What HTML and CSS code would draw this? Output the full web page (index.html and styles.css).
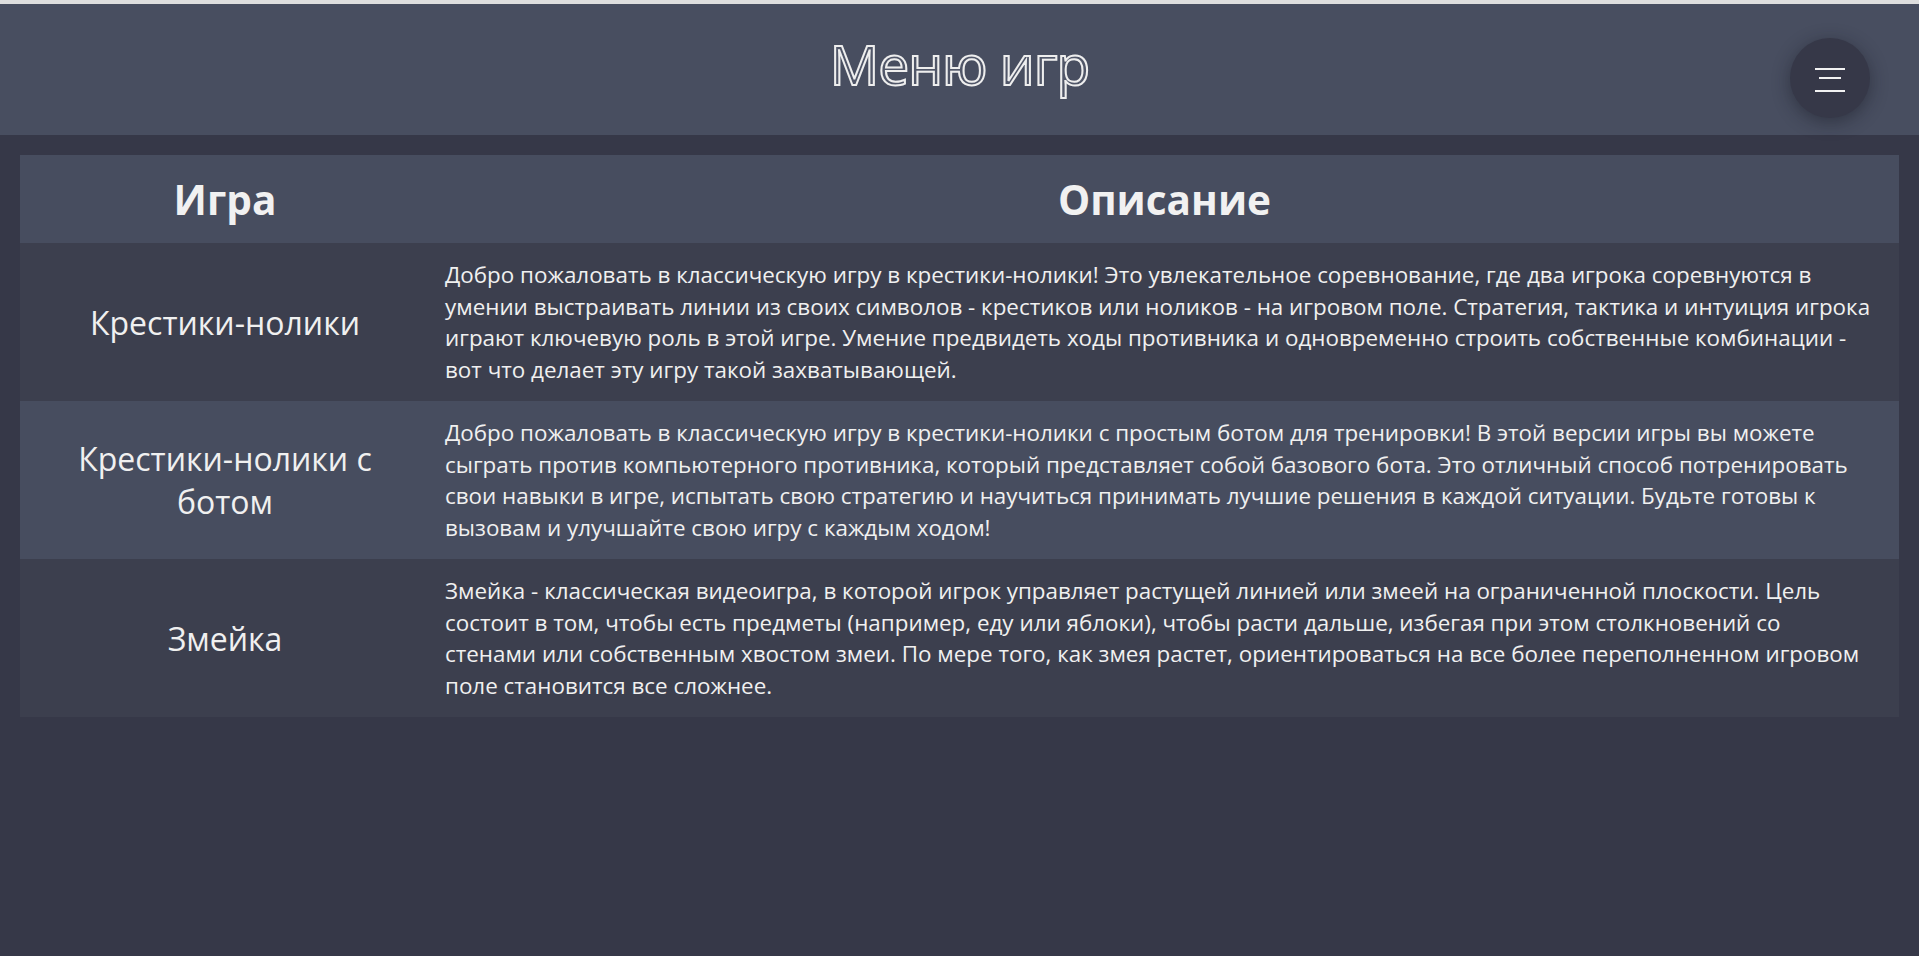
FILE: index.html
```html
<!DOCTYPE html>
<html lang="ru">
<head>
<meta charset="utf-8">
<title>Меню игр</title>
<link rel="stylesheet" href="styles.css">
</head>
<body>
<header class="topbar">
  <h1 class="title">Меню игр</h1>
  <button class="menu-btn" aria-label="Меню">
    <svg width="80" height="80" viewBox="0 0 80 80">
      <rect x="25" y="30" width="30" height="2" fill="#f2f2f2"/>
      <rect x="29" y="39" width="22" height="2" fill="#f2f2f2"/>
      <rect x="25" y="52" width="30" height="2" fill="#f2f2f2"/>
    </svg>
  </button>
</header>
<main class="content">
  <table class="games">
    <thead>
      <tr><th class="col-game">Игра</th><th class="col-desc">Описание</th></tr>
    </thead>
    <tbody>
      <tr>
        <td class="game-name">Крестики-нолики</td>
        <td class="game-desc">Добро пожаловать в классическую игру в крестики-нолики! Это увлекательное соревнование, где два игрока соревнуются в умении выстраивать линии из своих символов - крестиков или ноликов - на игровом поле. Стратегия, тактика и интуиция игрока играют ключевую роль в этой игре. Умение предвидеть ходы противника и одновременно строить собственные комбинации - вот что делает эту игру такой захватывающей.</td>
      </tr>
      <tr>
        <td class="game-name">Крестики-нолики с ботом</td>
        <td class="game-desc">Добро пожаловать в классическую игру в крестики-нолики с простым ботом для тренировки! В этой версии игры вы можете сыграть против компьютерного противника, который представляет собой базового бота. Это отличный способ потренировать свои навыки в игре, испытать свою стратегию и научиться принимать лучшие решения в каждой ситуации. Будьте готовы к вызовам и улучшайте свою игру с каждым ходом!</td>
      </tr>
      <tr>
        <td class="game-name">Змейка</td>
        <td class="game-desc">Змейка - классическая видеоигра, в которой игрок управляет растущей линией или змеей на ограниченной плоскости. Цель состоит в том, чтобы есть предметы (например, еду или яблоки), чтобы расти дальше, избегая при этом столкновений со стенами или собственным хвостом змеи. По мере того, как змея растет, ориентироваться на все более переполненном игровом поле становится все сложнее.</td>
      </tr>
    </tbody>
  </table>
</main>
</body>
</html>
```

FILE: styles.css
```css
html, body {
  margin: 0;
  padding: 0;
}

body {
  background: #363848;
  border-top: 4px solid #dedede;
  font-family: "Open Sans", "Noto Sans", sans-serif;
  color: #f0f0f0;
  min-height: 952px;
}

.topbar {
  position: relative;
  height: 131px;
  background: #484e60;
  display: flex;
  align-items: center;
  justify-content: center;
}

.title {
  margin: 0;
  font-family: "Open Sans", "Noto Sans", sans-serif;
  font-weight: 400;
  font-size: 55px;
  line-height: 1;
  color: #505668;
  -webkit-text-stroke: 2px #eeeeee;
  letter-spacing: -1px;
  position: relative;
  top: -6px;
}

.menu-btn {
  position: absolute;
  left: 1790px;
  top: 34px;
  width: 80px;
  height: 80px;
  padding: 0;
  border: none;
  border-radius: 50%;
  background: #363848;
  box-shadow: 0 4px 18px rgba(20, 22, 30, 0.45);
  display: block;
}

.menu-btn svg {
  display: block;
}

.content {
  padding: 20px;
}

.games {
  width: 100%;
  border-collapse: collapse;
  border-spacing: 0;
}

.games thead tr {
  background: #474d5f;
}

.games th {
  height: 88px;
  padding: 0 15px;
  font-size: 40.5px;
  font-weight: 700;
  text-align: center;
  vertical-align: middle;
  color: #f1f1f1;
}

.col-game {
  width: 380px;
}

.games tbody tr:nth-child(odd) {
  background: #3c3f4e;
}

.games tbody tr:nth-child(even) {
  background: #474d5f;
}

.game-name {
  padding: 16px 15px;
  font-size: 32px;
  line-height: 43px;
  text-align: center;
  vertical-align: middle;
}

.game-desc {
  padding: 16px 27px 16px 15px;
  height: 126px;
  font-size: 22.4px;
  line-height: 31.5px;
  text-align: left;
  vertical-align: middle;
}
```
